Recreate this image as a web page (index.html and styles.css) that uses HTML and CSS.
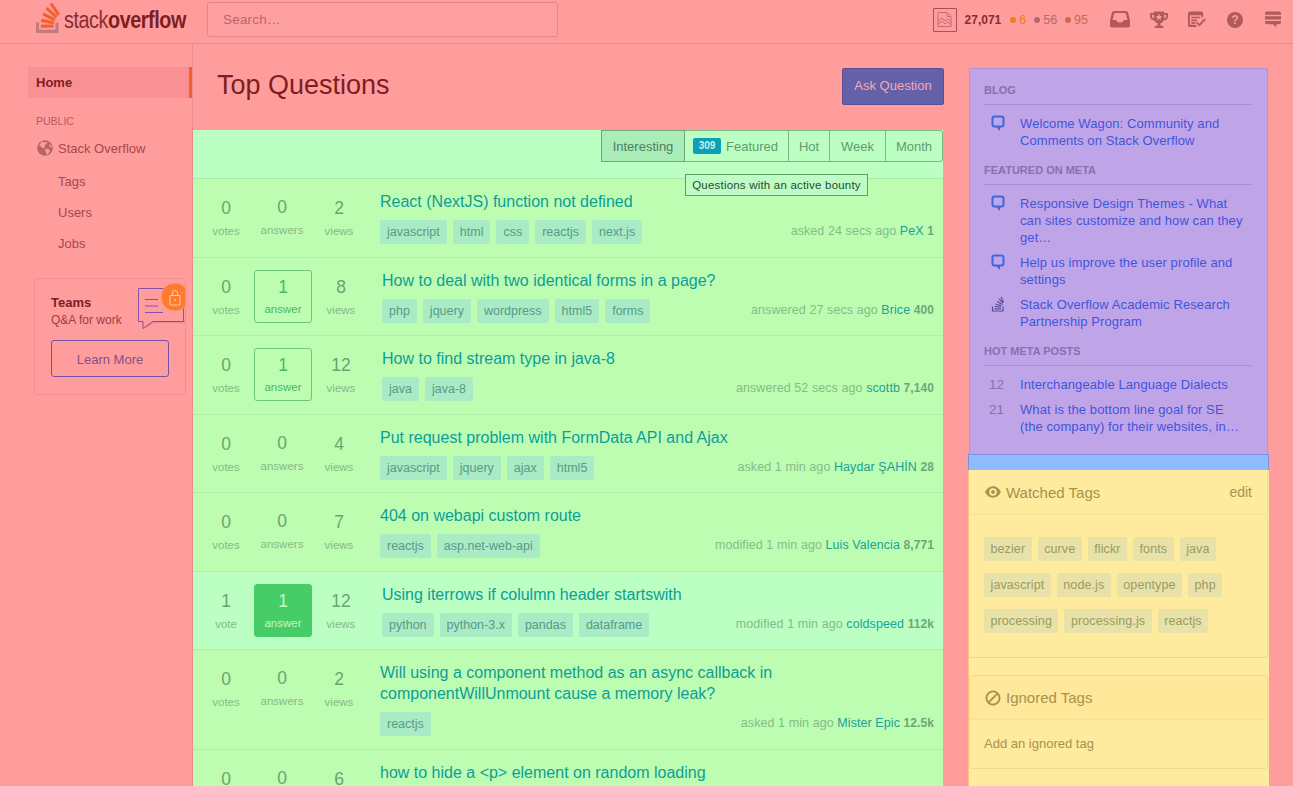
FILE: index.html
```html
<!DOCTYPE html>
<html lang="en">
<head>
<meta charset="utf-8">
<title>Top Questions</title>
<link rel="stylesheet" href="styles.css">
</head>
<body>
<header class="topbar">
  <a class="logo">
    <svg class="logo-mark" width="24" height="30" viewBox="0 0 32 37" preserveAspectRatio="none"><path fill="#c07a80" d="M26 33v-9h4v13H0V24h4v9h22z"/><path fill="#f4602a" stroke="#f4602a" stroke-width=".8" d="M21.5 0l-2.7 2 9.9 13.3 2.7-2L21.5 0zM26 18.4L13.3 7.8l2.1-2.5 12.7 10.6-2.1 2.5zM9.1 15.2l15 7 1.4-3-15-7-1.4 3zm14 10.79l.68-2.95-16.1-3.35L7 23l16.1 2.99zM23 30H7v-3h16v3z"/></svg>
    <span class="logo-text">stack<b>overflow</b></span>
  </a>
  <input class="search" type="text" placeholder="Search…">
  <div class="userbar">
    <span class="avatar"><svg width="19" height="19" viewBox="0 0 19 19" fill="none" stroke="#c46f78"><path d="M3 2.5h9l4 4v10H3zM12 2.500v4h4M3 11l4-3 3 3 3-2 3 3M3 14l4-3 3 3 3-2 3 3"/></svg></span>
    <b class="rep">27,071</b>
    <span class="badge gold"><i></i>6</span>
    <span class="badge silver"><i></i>56</span>
    <span class="badge bronze"><i></i>95</span>
    <svg class="tool t1" width="20" height="17" viewBox="0 0 20 17"><path fill="#b05a5c" fill-rule="evenodd" d="M4 0h12q1.500 0 2 1.500L20 9v5.500q0 2-2 2H2q-2 0-2-2V9L2 1.500Q2.500 0 4 0zM4.500 2L2.500 9H6l2 2.500h4L14 9h3.500l-2-7z"/></svg>
    <svg class="tool t2" width="18" height="18" viewBox="0 0 19 18"><path fill="#b05a5c" fill-rule="evenodd" d="M4 0h11v1.500h4V5q0 4-4.500 4.500Q13 12 11 12.500V15h3v2.500H5V15h3v-2.500Q6 12 4.500 9.500 0 9 0 5V1.500h4zM2 3.500V5q0 2 2 2.500V3.500zm15 0h-2v4q2-.5 2-2.500zM9.500 2.500l-1 2.300-2.400.2 1.800 1.600-.6 2.400 2.200-1.300 2.200 1.300-.6-2.400L12.900 5l-2.400-.2z"/></svg>
    <svg class="tool t3" width="18" height="17" viewBox="0 0 19 17"><path fill="#b05a5c" d="M0 2q0-2 2-2h12q2 0 2 2v3l-2 2V4H2v10h6l1.500 2.500H2q-2 0-2-2zM3.500 5.500h9v1.800h-9zM3.500 8.500h6v1.800h-6zM3.500 11.500h4v1.800h-4z"/><path fill="none" stroke="#b05a5c" stroke-width="2" d="M9 11.500l3 3 6-6.500"/></svg>
    <svg class="tool t4" width="16" height="16" viewBox="0 0 17 17"><circle cx="8.500" cy="8.500" r="8.500" fill="#b05a5c"/><text x="8.500" y="13.200" text-anchor="middle" class="q-mark">?</text></svg>
    <svg class="tool t5" width="16" height="18" viewBox="0 0 17 18"><path fill="#b05a5c" d="M2 0h13q2 0 2 2v1.500H0V2q0-2 2-2zM0 5h17v3.500H0zM0 10h17v1.500q0 2-2 2h-3V17l-3.500-3.500H2q-2 0-2-2z"/></svg>
  </div>
</header>

<div class="page">
  <nav class="leftnav">
    <a class="nav-home">Home</a>
    <div class="nav-label">PUBLIC</div>
    <a class="nav-so">
      <svg width="16" height="16" viewBox="0 0 16 16"><circle cx="8" cy="8" r="7.800" fill="#b8656a"/><path fill="#ff9d9d" d="M5 1.800l3 .7 2.500-.5-1 2L7.500 5.500 8 7.500l-2.500.5L3 5.500l-1 .5Q3 3 5 1.800zM9 8.500l3 1 1 1.500-2 3-1.500.8-.5-2.800-1-1.500zM12 4.500l2 .5.700 2.500-1.700-.5z"/></svg>
      Stack Overflow
    </a>
    <a class="nav-sub">Tags</a>
    <a class="nav-sub">Users</a>
    <a class="nav-sub">Jobs</a>
    <div class="teams">
      <svg class="teams-art" width="50" height="50" viewBox="0 0 50 50" fill="none"><path fill="#e88a90" d="M8 47l9-7h32v-3H16z"/><path stroke="#8a4fa8" stroke-width="1" d="M2.500 5.500h45v33H17l-10 7v-7H2.500z" fill="#ff9d9d"/><path stroke="#8a4fa8" d="M9 16.500h13M9 23h13M9 29.500h18"/><circle cx="39" cy="14" r="14" fill="#ff7a2e" stroke="#f4a070" stroke-width="1"/><path stroke="#ffc9a0" d="M34 12.500h10v9.500H34zM36.500 12.500V10a2.500 2.500 0 0 1 5 0v2.500"/><circle cx="39" cy="17" r="1" fill="#ffc9a0"/></svg>
      <div class="teams-title">Teams</div>
      <div class="teams-sub">Q&amp;A for work</div>
      <a class="teams-btn">Learn More</a>
    </div>
  </nav>

  <main class="content">
    <div class="page-head">
      <h1>Top Questions</h1>
      <a class="ask">Ask Question</a>
    </div>
    <section class="questions">
      <div class="filterbar">
        <div class="filters">
          <a class="on">Interesting</a>
          <a class="feat"><span class="count">309</span>Featured</a>
          <a class="f-hot">Hot</a>
          <a class="f-week">Week</a>
          <a class="f-month">Month</a>
        </div>
        <div class="tooltip">Questions with an active bounty</div>
      </div>

      <article class="q">
        <div class="stat"><b>0</b><span>votes</span></div>
        <div class="stat ans"><b>0</b><span>answers</span></div>
        <div class="stat views"><b>2</b><span>views</span></div>
        <div class="sum">
          <h3>React (NextJS) function not defined</h3>
          <div class="foot">
            <div class="tags"><a>javascript</a><a>html</a><a>css</a><a>reactjs</a><a>next.js</a></div>
            <div class="meta">asked 24 secs ago <a>PeX</a> <b>1</b></div>
          </div>
        </div>
      </article>

      <article class="q">
        <div class="stat"><b>0</b><span>votes</span></div>
        <div class="stat box"><b>1</b><span>answer</span></div>
        <div class="stat views"><b>8</b><span>views</span></div>
        <div class="sum">
          <h3>How to deal with two identical forms in a page?</h3>
          <div class="foot">
            <div class="tags"><a>php</a><a>jquery</a><a>wordpress</a><a>html5</a><a>forms</a></div>
            <div class="meta">answered 27 secs ago <a>Brice</a> <b>400</b></div>
          </div>
        </div>
      </article>

      <article class="q">
        <div class="stat"><b>0</b><span>votes</span></div>
        <div class="stat box"><b>1</b><span>answer</span></div>
        <div class="stat views"><b>12</b><span>views</span></div>
        <div class="sum">
          <h3>How to find stream type in java-8</h3>
          <div class="foot">
            <div class="tags"><a>java</a><a>java-8</a></div>
            <div class="meta">answered 52 secs ago <a>scottb</a> <b>7,140</b></div>
          </div>
        </div>
      </article>

      <article class="q">
        <div class="stat"><b>0</b><span>votes</span></div>
        <div class="stat ans"><b>0</b><span>answers</span></div>
        <div class="stat views"><b>4</b><span>views</span></div>
        <div class="sum">
          <h3>Put request problem with FormData API and Ajax</h3>
          <div class="foot">
            <div class="tags"><a>javascript</a><a>jquery</a><a>ajax</a><a>html5</a></div>
            <div class="meta">asked 1 min ago <a>Haydar ŞAHİN</a> <b>28</b></div>
          </div>
        </div>
      </article>

      <article class="q">
        <div class="stat"><b>0</b><span>votes</span></div>
        <div class="stat ans"><b>0</b><span>answers</span></div>
        <div class="stat views"><b>7</b><span>views</span></div>
        <div class="sum">
          <h3>404 on webapi custom route</h3>
          <div class="foot">
            <div class="tags"><a>reactjs</a><a>asp.net-web-api</a></div>
            <div class="meta">modified 1 min ago <a>Luis Valencia</a> <b>8,771</b></div>
          </div>
        </div>
      </article>

      <article class="q hot">
        <div class="stat"><b>1</b><span>vote</span></div>
        <div class="stat box solved"><b>1</b><span>answer</span></div>
        <div class="stat views"><b>12</b><span>views</span></div>
        <div class="sum">
          <h3>Using iterrows if colulmn header startswith</h3>
          <div class="foot">
            <div class="tags"><a>python</a><a>python-3.x</a><a>pandas</a><a>dataframe</a></div>
            <div class="meta">modified 1 min ago <a>coldspeed</a> <b>112k</b></div>
          </div>
        </div>
      </article>

      <article class="q">
        <div class="stat"><b>0</b><span>votes</span></div>
        <div class="stat ans"><b>0</b><span>answers</span></div>
        <div class="stat views"><b>2</b><span>views</span></div>
        <div class="sum">
          <h3>Will using a component method as an async callback in componentWillUnmount cause a memory leak?</h3>
          <div class="foot">
            <div class="tags"><a>reactjs</a></div>
            <div class="meta">asked 1 min ago <a>Mister Epic</a> <b>12.5k</b></div>
          </div>
        </div>
      </article>

      <article class="q">
        <div class="stat"><b>0</b><span>votes</span></div>
        <div class="stat ans"><b>0</b><span>answers</span></div>
        <div class="stat views"><b>6</b><span>views</span></div>
        <div class="sum">
          <h3>how to hide a &lt;p&gt; element on random loading</h3>
        </div>
      </article>
    </section>
  </main>

  <aside class="side">
    <div class="community">
      <h4>Blog</h4>
      <div class="item"><svg class="bubble" viewBox="0 0 14 17" width="14" height="17"><path fill="none" stroke="#3f66dc" stroke-width="2" d="M3.500 1.500h7q2 0 2 2v6q0 2-2 2H8v2l-2-2H3.500q-2 0-2-2v-6q0-2 2-2z"/></svg><a>Welcome Wagon: Community and Comments on Stack Overflow</a></div>
      <h4>Featured on Meta</h4>
      <div class="item"><svg class="bubble" viewBox="0 0 14 17" width="14" height="17"><path fill="none" stroke="#3f66dc" stroke-width="2" d="M3.500 1.500h7q2 0 2 2v6q0 2-2 2H8v2l-2-2H3.500q-2 0-2-2v-6q0-2 2-2z"/></svg><a>Responsive Design Themes - What can sites customize and how can they get…</a></div>
      <div class="item"><svg class="bubble" viewBox="0 0 14 17" width="14" height="17"><path fill="none" stroke="#3f66dc" stroke-width="2" d="M3.500 1.500h7q2 0 2 2v6q0 2-2 2H8v2l-2-2H3.500q-2 0-2-2v-6q0-2 2-2z"/></svg><a>Help us improve the user profile and settings</a></div>
      <div class="item"><svg class="bubble" viewBox="0 0 14 17" width="14" height="17"><path fill="none" stroke="#5a4a9a" stroke-width="1.200" d="M1.500 10.500v4.500h10.500v-4.500M3.500 12.800h6.500M3.800 10.300l6.300.7M4.500 8l6 1.800M6 5.500l5.500 3M8 3l4 4M10 1l2.500 5"/></svg><a>Stack Overflow Academic Research Partnership Program</a></div>
      <h4>Hot Meta Posts</h4>
      <div class="item"><span class="num">12</span><a>Interchangeable Language Dialects</a></div>
      <div class="item"><span class="num">21</span><a>What is the bottom line goal for SE (the company) for their websites, in…</a></div>
    </div>
    <div class="band"></div>
    <div class="tagzone">
      <div class="tagcard">
        <div class="tc-head">
          <svg width="16" height="12" viewBox="0 0 17 12"><path fill="#a8924e" fill-rule="evenodd" d="M8.500 0c3.800 0 6.800 2.800 8.500 6-1.700 3.200-4.700 6-8.500 6S1.700 9.200 0 6c1.700-3.200 4.700-6 8.500-6zm0 2a4 4 0 1 0 0 8 4 4 0 0 0 0-8zm0 2a2 2 0 1 1 0 4 2 2 0 0 1 0-4z"/></svg>
          <span class="tc-title">Watched Tags</span>
          <a class="edit">edit</a>
        </div>
        <div class="watched">
          <a>bezier</a><a>curve</a><a>flickr</a><a>fonts</a><a>java</a><a>javascript</a><a>node.js</a><a>opentype</a><a>php</a><a>processing</a><a>processing.js</a><a>reactjs</a>
        </div>
      </div>
      <div class="tagcard ignored">
        <div class="tc-head">
          <svg width="16" height="16" viewBox="0 0 17 17" fill="none" stroke="#a8924e" stroke-width="2"><circle cx="8.500" cy="8.500" r="7"/><path d="M3.500 13.500l10-10"/></svg>
          <span class="tc-title">Ignored Tags</span>
        </div>
        <div class="tc-body">Add an ignored tag</div>
      </div>
    </div>
  </aside>
</div>
</body>
</html>
```
FILE: styles.css
```css
* { box-sizing: border-box; }
html, body { margin: 0; height: 786px; overflow: hidden; }
body { background: #ff9d9d; font-family: "Liberation Sans", Arial, sans-serif; font-size: 13px; color: #a8474e; }
a { color: inherit; text-decoration: none; }
h1, h3, h4 { margin: 0; font-weight: normal; }

.topbar { height: 44px; border-bottom: 1px solid #ea8a8e; display: flex; align-items: flex-start; padding-left: 36px; }
.logo { display: flex; align-items: flex-start; width: 171px; padding-top: 3px; }
.logo-mark { flex: none; }
.logo-text { display: block; font-size: 23px; line-height: 26px; letter-spacing: -.5px; color: #8a2c30; margin: 4px 0 0 4px; white-space: nowrap; transform: scaleX(.86); transform-origin: left center; }
.logo-text b { color: #7e1e22; }
.search { width: 351px; height: 35px; margin-top: 2px; border: 1px solid #e0868c; border-radius: 3px; background: #ffa0a0; padding: 0 15px; font: 13.500px "Liberation Sans", sans-serif; letter-spacing: .2px; color: #c0606c; outline: none; }
.search::placeholder { color: #c0606c; opacity: 1; }
.userbar { margin-left: auto; display: flex; align-items: center; height: 39px; padding-right: 12px; font-size: 12.500px; }
.avatar { width: 24px; height: 24px; border: 1px solid #a85058; border-radius: 1px; display: flex; align-items: center; justify-content: center; margin-right: 8px; }
.rep { color: #8a2c30; margin-right: 9px; font-size: 12px; }
.badge { display: flex; align-items: center; margin-right: 8px; }
.badge i { width: 6px; height: 6px; border-radius: 50%; margin-right: 3px; background: currentColor; }
.gold { color: #e8801e; }
.silver { color: #b06a70; }
.bronze { color: #c86a50; margin-right: 22px; }
.tool { flex: none; }
.t1, .t2 { margin-right: 20px; }
.t3 { margin-right: 21px; }
.t4 { margin-right: 22px; }
.q-mark { font: bold 13px "Liberation Sans", sans-serif; fill: #ff9d9d; }

.page { display: flex; height: 742px; overflow: hidden; }

.leftnav { width: 193px; flex: none; border-right: 1px solid #ea8a8e; padding-top: 23px; }
.nav-home { display: block; margin-left: 28px; height: 31px; line-height: 31px; padding-left: 8px; background: #f99094; border-right: 3px solid #f4602a; font-weight: bold; color: #7e1e22; }
.nav-label { margin: 16px 0 0 36px; font-size: 10.500px; line-height: 14px; color: #b55c62; }
.nav-so { display: flex; align-items: center; gap: 5px; margin: 11px 0 0 37px; height: 18px; font-size: 13px; color: #a8474e; }
.nav-sub { display: block; margin-left: 58px; font-size: 13px; height: 31px; line-height: 31px; }
.nav-so + .nav-sub { margin-top: 9px; }
.teams { position: relative; overflow: hidden; margin: 19px 6px 0 34px; height: 117px; padding: 16px; border: 1px solid #f48d92; border-radius: 3px; }
.teams-art { position: absolute; right: -1px; top: 4px; }
.teams-title { font-weight: bold; line-height: 16px; color: #7e1e22; }
.teams-sub { font-size: 12px; line-height: 18px; color: #a03c44; }
.teams-btn { display: block; margin-top: 11px; width: 118px; height: 37px; line-height: 37px; text-align: center; border: 1px solid #7a50a8; border-radius: 3px; font-size: 13px; color: #84508f; position: relative; }

.content { width: 750px; flex: none; }
.page-head { height: 86px; display: flex; justify-content: space-between; align-items: flex-start; padding: 24px 0 0 24px; }
h1 { font-size: 27px; line-height: 34px; color: #7e1e22; }
.ask { width: 102px; height: 37px; line-height: 33px; text-align: center; background: #6561a8; border: 1px solid #5a4f98; border-radius: 2px; color: #f4a8b4; font-size: 13px; margin-right: -1px; }

.questions { background: #bdfdb1; height: 700px; overflow: hidden; }
.filterbar { position: relative; height: 49px; background: #bbffc3; border-bottom: 1px solid #a5ebac; }
.filters { position: absolute; right: 0; top: 0; display: flex; height: 32px; border: 1px solid #7ab884; border-radius: 3px; font-size: 13px; color: #5f9a70; }
.filters a { display: flex; align-items: center; justify-content: center; border-left: 1px solid #7ab884; }
.filters .on { width: 82px; border-left: 0; background: #aaedb8; color: #4d7d5c; box-shadow: 0 0 0 1px #6ea878; position: relative; }
.filters .feat { width: 104px; justify-content: flex-start; padding-left: 8px; }
.filters .f-hot { width: 41px; }
.filters .f-week { width: 56px; }
.filters .f-month { width: 57px; }
.count { background: #0c9fb8; color: #c8f2ee; font-size: 10px; font-weight: bold; height: 16px; line-height: 16px; width: 28px; text-align: center; border-radius: 2px; margin-right: 5px; }
.tooltip { position: absolute; left: 492px; top: 44px; width: 183px; height: 22px; line-height: 20px; text-align: center; background: #bdfdc5; border: 1px solid #5e9f64; font-size: 11.500px; color: #2a4a2e; z-index: 2; white-space: nowrap; letter-spacing: .2px; }

.q { display: flex; align-items: flex-start; padding: 12px 9px 12.500px 5px; border-bottom: 1px solid #aeeea8; }
.q.hot { background: #bbffc3; }
.stat { width: 56px; height: 53px; padding-top: 6px; text-align: center; color: #6ba46e; }
.stat b { display: block; font-weight: normal; font-size: 17.500px; line-height: 22px; }
.stat span { display: block; margin-top: 5px; font-size: 11.500px; line-height: 14px; color: #86b986; }
.stat.ans { padding-top: 5px; }
.stat.views { width: 58px; margin-right: 12px; }
.stat.box { width: 58px; height: 53px; padding-top: 5px; border: 1px solid #6cc878; border-radius: 3px; color: #4db860; }
.stat.box span { margin-top: 4px; color: #4db860; }
.stat.solved { background: #46cd68; border-color: #46cd68; color: #c3f7c8; }
.stat.solved span { color: #c3f7c8; }
.sum { flex: 1; min-width: 0; }
h3 { font-size: 16px; line-height: 21px; color: #0d9d98; }
.foot { display: flex; justify-content: space-between; align-items: center; margin-top: 8px; }
.tags { display: flex; gap: 6px; }
.tags a, .watched a { display: block; height: 24px; line-height: 24px; font-size: 12.500px; border-radius: 2px; }
.tags a { padding: 0 7px; background: #a9ebc4; color: #5a9a88; }
.meta { font-size: 12.500px; color: #86bb88; margin-top: -2px; letter-spacing: .08px; }
.meta a { color: #1c9f98; }
.meta b { color: #6fa676; font-size: 12px; }

.side { width: 301px; flex: none; margin-left: 25px; }
.community { margin: 24px 1px 0; height: 386px; padding: 0 15px 0 14px; background: #bfa5e8; border: 1px solid #ae94d8; border-bottom: 0; border-radius: 2px 2px 0 0; }
.community h4 { margin-top: 14px; line-height: 15px; padding-bottom: 6px; border-bottom: 1px solid #a88fd4; font-size: 11px; font-weight: bold; text-transform: uppercase; color: #8a6eb0; }
.item { display: flex; margin-top: 8px; font-size: 13px; line-height: 17px; color: #3f55da; letter-spacing: .1px; }
.community h4 + .item { margin-top: 10px; }
.item a { width: 228px; }
.bubble { flex: none; margin: 0 15px 0 7px; }
.num { flex: none; width: 36px; padding-left: 5px; font-size: 13.500px; color: #8a6eb0; }
.band { height: 16px; background: #8fbcff; border: 1px solid #7d8de0; border-bottom: 0; }
.tagzone { height: 316px; background: #ffeb9e; border-left: 1px solid #ffc27a; padding-right: 1px; }
.tagcard { height: 188px; border-bottom: 1px solid #ead78e; border-right: 1px solid #f2df96; border-radius: 0 0 3px 3px; }
.tc-head { display: flex; align-items: center; height: 45px; padding: 0 15px 0 16px; border-bottom: 1px solid #f5e295; gap: 5px; color: #a8924e; }
.tc-title { font-size: 15px; }
.edit { margin-left: auto; font-size: 14px; }
.watched { display: flex; flex-wrap: wrap; gap: 12px 6px; padding: 22px 15px 0; }
.watched a { padding: 0 6.500px; background: #e8e2a8; color: #9a9a66; letter-spacing: .1px; }
.ignored { height: 94px; margin-top: 17px; border: 1px solid #f0dc90; border-radius: 3px; background: #ffeb9e; }
.ignored .tc-head { height: 44px; padding-left: 15px; background: #ffe89a; }
.tc-body { padding: 16px 14px; font-size: 13px; line-height: 16px; color: #a8924e; }
```
